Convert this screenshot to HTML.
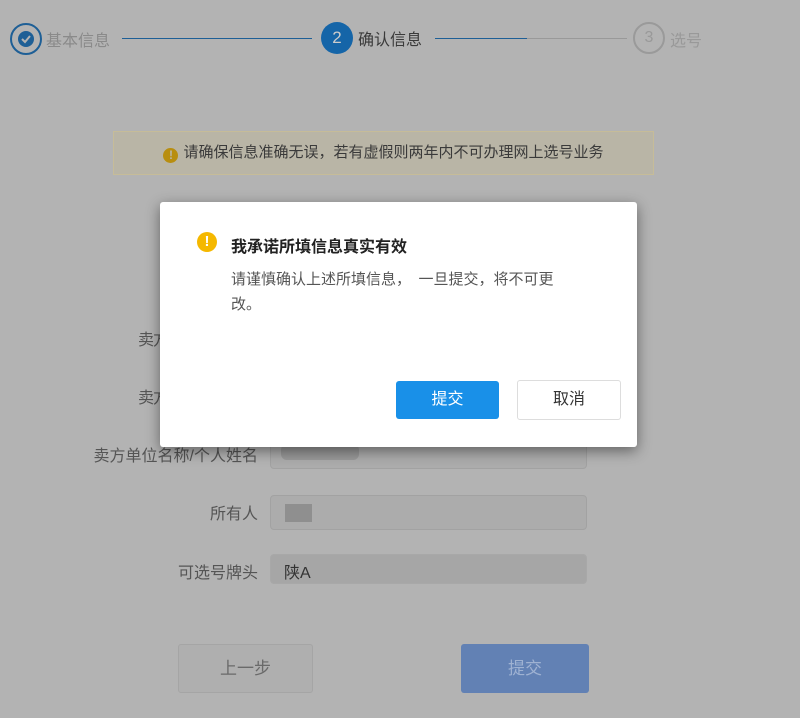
<!DOCTYPE html>
<html><head><meta charset="utf-8"><style>
body{margin:0;width:800px;height:718px;background:#b3b3b3;position:relative;overflow:hidden;font-family:"Liberation Sans","Noto Sans CJK SC",sans-serif;}
.a{position:absolute;}
.c{border-radius:50%;box-sizing:border-box;text-align:center;}
.lbl{position:absolute;right:542px;font-size:16px;color:#555;white-space:nowrap;}
.inp{position:absolute;left:270px;width:317px;box-sizing:border-box;border:1px solid #a2a2a2;border-radius:4px;background:#acacac;}
</style></head><body>
<div class="a c" style="left:10px;top:23px;width:32px;height:32px;border:2px solid #1e5f96;"><svg width="28" height="28" viewBox="0 0 28 28"><circle cx="14" cy="14" r="8" fill="#1e5f96"/><path d="M10 14l3 3 5-6" stroke="#b3b3b3" stroke-width="2" fill="none"/></svg></div>
<div class="a" style="left:46px;top:27px;font-size:16px;color:#8a8a8a;">基本信息</div>
<div class="a" style="left:122px;top:38px;width:190px;height:1px;background:#1e5f96;"></div>
<div class="a c" style="left:321px;top:22px;width:32px;height:32px;background:#1565a8;color:#ccc;font-size:17px;line-height:32px;">2</div>
<div class="a" style="left:358px;top:26px;font-size:16px;color:#3a3a3a;">确认信息</div>
<div class="a" style="left:435px;top:38px;width:92px;height:1px;background:#1e5f96;"></div>
<div class="a" style="left:527px;top:38px;width:100px;height:1px;background:#999;"></div>
<div class="a c" style="left:633px;top:22px;width:32px;height:32px;border:2px solid #9a9a9a;color:#999;font-size:16px;line-height:28px;">3</div>
<div class="a" style="left:670px;top:27px;font-size:16px;color:#999;">选号</div>
<div class="a" style="left:113px;top:131px;width:541px;height:44px;box-sizing:border-box;background:#b9b5a6;border:1px solid #c6bc98;text-align:center;line-height:42px;font-size:15px;color:#3a3a3a;"><span style="display:inline-block;width:15px;height:15px;border-radius:50%;background:#b88e10;color:#b9b5a6;font-size:12px;line-height:15px;font-weight:bold;vertical-align:-2px;margin-right:5px;">!</span>请确保信息准确无误，若有虚假则两年内不可办理网上选号业务</div>
<div class="lbl" style="top:326px;letter-spacing:-1px;">卖方身份证件类型</div>
<div class="lbl" style="top:384px;letter-spacing:-1px;">卖方身份证件号码</div>
<div class="lbl" style="top:442px;">卖方单位名称/个人姓名</div>
<div class="inp" style="top:435px;height:34px;"><div class="a" style="left:10px;top:8px;width:78px;height:16px;background:#999;border-radius:6px;"></div></div>
<div class="lbl" style="top:500px;">所有人</div>
<div class="inp" style="top:495px;height:35px;"><div class="a" style="left:14px;top:8px;width:27px;height:18px;background:#8f8f8f;"></div></div>
<div class="lbl" style="top:559px;">可选号牌头</div>
<div class="inp" style="top:554px;height:30px;border-color:#a8a8a8;background:#a6a6a6;font-size:16px;color:#333;padding:4px 0 0 13px;">陕A</div>
<div class="a" style="left:178px;top:644px;width:135px;height:49px;box-sizing:border-box;border:1px solid #a5a5a5;border-radius:3px;background:#afafaf;color:#6a6a6a;font-size:17px;text-align:center;line-height:47px;">上一步</div>
<div class="a" style="left:461px;top:644px;width:128px;height:49px;box-sizing:border-box;border-radius:3px;background:#6281b4;color:#9fb2d2;font-size:17px;text-align:center;line-height:49px;">提交</div>
<div class="a" style="left:160px;top:202px;width:477px;height:245px;background:#fff;border-radius:3px;box-shadow:0 4px 14px rgba(0,0,0,.45);">
<div class="a c" style="left:37px;top:30px;width:20px;height:20px;background:#f5b800;color:#fff;font-weight:bold;font-size:15px;line-height:20px;">!</div>
<div class="a" style="left:71px;top:31px;font-size:16px;font-weight:bold;color:#222;">我承诺所填信息真实有效</div>
<div class="a" style="left:71px;top:65px;width:340px;font-size:15px;line-height:25px;color:#555;">请谨慎确认上述所填信息，　一旦提交，将不可更改。</div>
<div class="a" style="left:236px;top:179px;width:103px;height:38px;background:#1990e8;border-radius:3px;color:#fff;font-size:16px;text-align:center;line-height:38px;">提交</div>
<div class="a" style="left:357px;top:178px;width:104px;height:40px;box-sizing:border-box;border:1px solid #ddd;border-radius:3px;color:#333;font-size:16px;text-align:center;line-height:38px;">取消</div>
</div>
</body></html>
